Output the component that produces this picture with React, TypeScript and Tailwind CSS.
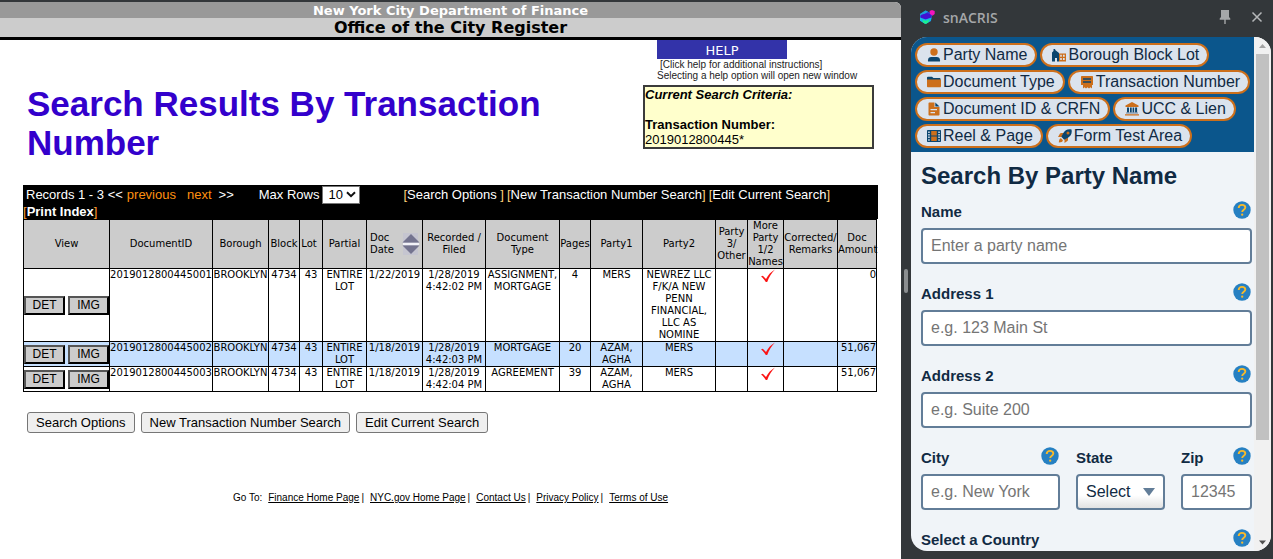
import type { ReactNode } from "react";

const NAVY = "#0b456e";
const ORANGE = "#cc6f1b";

function Person() {
  return (
    <svg width="14" height="14" viewBox="0 0 14 14" aria-hidden="true">
      <circle cx="7" cy="4" r="3.7" fill={ORANGE} />
      <path d="M1 13.6v-1.4c0-2 1.4-3.2 3.2-3.2h5.6c1.8 0 3.2 1.2 3.2 3.2v1.4z" fill={NAVY} />
    </svg>
  );
}

function Buildings() {
  return (
    <svg width="14" height="14" viewBox="0 0 14 14" aria-hidden="true">
      <path d="M0 13.500V4.500L1.500 3V1h1.700v1L7 5v8.500H5V10H3v3.500z" fill={NAVY} />
      <path fillRule="evenodd" d="M7 5.500h7v8H7zM8.200 6.800v2h1.600v-2zm2.800 0v2h1.700v-2zM8.200 10v2h1.600v-2zm2.800 0v2h1.700v-2z" fill={ORANGE} />
    </svg>
  );
}

function Folder() {
  return (
    <svg width="14" height="14" viewBox="0 0 14 14" aria-hidden="true">
      <path d="M0 5V2.500C0 2 .4 1.700 1 1.700h4L6.500 3h6c.6 0 1 .4 1 1v1z" fill={NAVY} />
      <path d="M0 4.500h14v6.700c0 .7-.5 1.100-1.100 1.100H1.100C.5 12.300 0 11.900 0 11.200z" fill={ORANGE} />
    </svg>
  );
}

function Receipt() {
  return (
    <svg width="14" height="14" viewBox="0 0 14 14" aria-hidden="true">
      <path d="M1 2c0-.6.4-1 1-1h10c.6 0 1 .4 1 1v8h-1v3.500l-1.500-1.200L9 13.500l-1.500-1.200L6 13.500l-1.500-1.200L3 13.500V10H1z" fill={ORANGE} />
      <path d="M3 3.300h8v1.500H3zM3 6.300h8v1.500H3z" fill={NAVY} />
    </svg>
  );
}

function Page() {
  return (
    <svg width="14" height="14" viewBox="0 0 14 14" aria-hidden="true">
      <path fillRule="evenodd" d="M1.500 1.500c0-.6.4-1 1-1H7.500V5H12.500v7.500c0 .6-.4 1-1 1h-9c-.6 0-1-.4-1-1zM3.500 7v1.300H10V7zm0 3v1.300H8V10z" fill={ORANGE} />
      <path d="M8.300.5L12.500 4.400H8.300z" fill={NAVY} />
    </svg>
  );
}

function Institution() {
  return (
    <svg width="14" height="14" viewBox="0 0 14 14" aria-hidden="true">
      <path d="M7 0l6.500 3.400V5H.5V3.400z" fill={ORANGE} />
      <path d="M2 5.500h2v5H2zM5 5.500h1.700v5H5zM7.600 5.500h1.600v5H7.600zM10.100 5.500h2v5h-2z" fill={NAVY} />
      <path d="M1 10.500h12v1.100H1z" fill="#6b86a0" />
      <path d="M0 12.300h14v1.200H0z" fill={ORANGE} />
    </svg>
  );
}

function Film() {
  return (
    <svg width="14" height="14" viewBox="0 0 14 14" aria-hidden="true">
      <path fillRule="evenodd" d="M1 1h12c.6 0 1 .4 1 1v10c0 .6-.4 1-1 1H1c-.6 0-1-.4-1-1V2c0-.6.4-1 1-1zM1.200 2.400v1.500h1.500V2.400zm0 2.600v1.500h1.500V5zm0 2.600v1.500h1.500V7.600zm0 2.600v1.500h1.500v-1.500zM11.300 2.400v1.500h1.500V2.400zm0 2.600v1.500h1.500V5zm0 2.600v1.500h1.500V7.600zm0 2.600v1.500h1.500v-1.500z" fill={NAVY} />
      <path d="M4.200 2h5.600v4.500H4.200zM4.200 7.500h5.600V12H4.200z" fill={ORANGE} />
    </svg>
  );
}

function Rocket() {
  return (
    <svg width="14" height="14" viewBox="0 0 14 14" aria-hidden="true">
      <path d="M6 4H3.200c-.5 0-.9.2-1.200.6L0 8h3.500zM10 8v2.800c0 .5-.2.9-.6 1.200L6.500 14v-3.500z" fill={ORANGE} />
      <path d="M13.500.4c-4-.8-6.500.9-8.200 3.600L3.300 7.800l2.900 2.900L10 8.700c2.700-1.700 4.400-4.200 3.500-8.300z" fill={NAVY} />
      <circle cx="10" cy="4.100" r="1.500" fill={ORANGE} />
      <path d="M3 9.300c-1.400.1-2 1.600-2.200 4.200 2.400-.2 4-.8 4.100-2.300z" fill={ORANGE} />
    </svg>
  );
}

function Logo() {
  return (
    <svg width="16" height="16" viewBox="0 0 16 16" aria-hidden="true">
      <path d="M1 5l5.500-3.500L12 4l1 2.500-1 5.500-5.500 3L1 11.500z" fill="#2b48d8" />
      <path d="M1 5l5.500-3.500L9 2.600 6 5 1 6.500z" fill="#1fa0d8" />
      <path d="M2 6l6-2 4 1.500V9L7 10.500 2 9z" fill="#4310d2" />
      <path d="M1 8.500l5.500 2 6-2-.7 3.500-5.300 3L1 11.700z" fill="#14b8e6" />
      <path d="M3.500 11l3.500.8 3.500-1.300L9 13.700 6.500 15 4 13.500z" fill="#1cf08f" />
      <path d="M10.500 2L13 1l2.700 1v3L13.500 6.800 11 5z" fill="#f414bd" />
    </svg>
  );
}

function Pin() {
  return (
    <svg width="12" height="14" viewBox="0 0 12 14" aria-hidden="true">
      <path d="M2 0h8v7l1.300 1.500v1.300H6.700V14H5.300V9.800H.7V8.500L2 7z" fill="#a5a7a9" />
    </svg>
  );
}

function CheckMark() {
  return (
    <svg className="ml-[13px] block" width="14" height="13" viewBox="0 0 14 13" role="img" aria-label="Yes">
      <path d="M0 7.500l1.800-.8L5 10C7 6 10 2.800 14 .5 10.500 4 8 8 6.200 13H4.800C3.500 10.700 2 9 0 7.500z" fill="#fb1414" />
    </svg>
  );
}

function SortArrows() {
  return (
    <svg width="18" height="22" viewBox="0 0 18 22" aria-hidden="true">
      <path d="M1 0h15v22H1z" fill="#c5c5d0" />
      <path d="M9 1l8.500 8.500H.5z" fill="#74748f" />
      <path d="M1 10h16v2H1z" fill="#f2f2f8" />
      <path d="M.5 12.500h17L9 21z" fill="#74748f" />
    </svg>
  );
}

const tabs: { label: string; icon: ReactNode }[] = [
  { label: "Party Name", icon: <Person /> },
  { label: "Borough Block Lot", icon: <Buildings /> },
  { label: "Document Type", icon: <Folder /> },
  { label: "Transaction Number", icon: <Receipt /> },
  { label: "Document ID & CRFN", icon: <Page /> },
  { label: "UCC & Lien", icon: <Institution /> },
  { label: "Reel & Page", icon: <Film /> },
  { label: "Form Test Area", icon: <Rocket /> },
];

function Lines({ text }: { text: string }) {
  return (
    <>
      {text.split("\n").map((line, i) => (
        <span key={i} className="block whitespace-nowrap">
          {line}
        </span>
      ))}
    </>
  );
}

const rows = [
  {
    id: "2019012800445001", date: "1/22/2019", filed: "1/28/2019\n4:42:02 PM", type: "ASSIGNMENT,\nMORTGAGE",
    pages: "4", party1: "MERS", party2: "NEWREZ LLC\nF/K/A NEW\nPENN\nFINANCIAL,\nLLC AS\nNOMINE", amount: "0", tinted: false,
  },
  {
    id: "2019012800445002", date: "1/18/2019", filed: "1/28/2019\n4:42:03 PM", type: "MORTGAGE",
    pages: "20", party1: "AZAM,\nAGHA", party2: "MERS", amount: "51,067", tinted: true,
  },
  {
    id: "2019012800445003", date: "1/18/2019", filed: "1/28/2019\n4:42:04 PM", type: "AGREEMENT",
    pages: "39", party1: "AZAM,\nAGHA", party2: "MERS", amount: "51,067", tinted: false,
  },
];

const smallButton =
  "h-[19px] flex-1 border-2 border-t-[#555] border-l-[#555] border-r-black border-b-black bg-[#ccc] text-center font-['Liberation_Sans',sans-serif] text-[12px] leading-[15px]";

function ResultsTable() {
  return (
    <table className="w-full table-fixed border-collapse text-center font-['DejaVu_Sans',sans-serif] text-[10px] leading-[12px] [&_td]:border [&_td]:border-black [&_td]:p-0 [&_td]:align-top [&_th]:border [&_th]:border-black [&_th]:p-0 [&_th]:font-normal">
      <colgroup>
        <col className="w-[86px]" />
        <col className="w-[103px]" />
        <col className="w-[56px]" />
        <col className="w-[31px]" />
        <col className="w-[23px]" />
        <col className="w-[44px]" />
        <col className="w-[56px]" />
        <col className="w-[63px]" />
        <col className="w-[74px]" />
        <col className="w-[31px]" />
        <col className="w-[52px]" />
        <col className="w-[73px]" />
        <col className="w-[32px]" />
        <col className="w-[36px]" />
        <col className="w-[54px]" />
        <col />
      </colgroup>
      <thead>
        <tr className="h-[49px] bg-[#ccc]">
          <th>View</th>
          <th>DocumentID</th>
          <th>Borough</th>
          <th>Block</th>
          <th><span className="block pr-1">Lot</span></th>
          <th>Partial</th>
          <th>
            <span className="flex items-center justify-between pr-[2px] pl-[3px]">
              <span className="text-left"><Lines text={"Doc\nDate"} /></span>
              <SortArrows />
            </span>
          </th>
          <th><Lines text={"Recorded /\nFiled"} /></th>
          <th><Lines text={"Document\nType"} /></th>
          <th>Pages</th>
          <th>Party1</th>
          <th>Party2</th>
          <th><Lines text={"Party\n3/\nOther"} /></th>
          <th><Lines text={"More\nParty\n1/2\nNames"} /></th>
          <th><Lines text={"Corrected/\nRemarks"} /></th>
          <th><Lines text={"Doc\nAmount"} /></th>
        </tr>
      </thead>
      <tbody>
        {rows.map((r) => (
          <tr key={r.id} className={r.tinted ? "bg-[#c6e0ff]" : "bg-white"}>
            <td className="align-middle!">
              <div className="flex gap-[3px]">
                <button type="button" className={smallButton}>DET</button>
                <button type="button" className={smallButton}>IMG</button>
              </div>
            </td>
            <td>{r.id}</td>
            <td>BROOKLYN</td>
            <td>4734</td>
            <td>43</td>
            <td><Lines text={"ENTIRE\nLOT"} /></td>
            <td>{r.date}</td>
            <td><Lines text={r.filed} /></td>
            <td><Lines text={r.type} /></td>
            <td>{r.pages}</td>
            <td><Lines text={r.party1} /></td>
            <td><Lines text={r.party2} /></td>
            <td></td>
            <td><CheckMark /></td>
            <td></td>
            <td className="text-right">{r.amount}</td>
          </tr>
        ))}
      </tbody>
    </table>
  );
}

const pageButton =
  "h-[21px] rounded-[3px] border border-[#767676] bg-[#efefef] px-2 text-[13px] leading-[19px]";

function BarLink({ children }: { children: string }) {
  return (
    <span className="whitespace-nowrap text-[#ffd27a]">
      [<a href="#" className="text-white">{children}</a>]
    </span>
  );
}

function RegisterPage() {
  return (
    <main className="min-w-0 flex-1 overflow-hidden rounded-tr-md bg-white font-['Liberation_Sans',Arial,sans-serif] text-[13px] text-black">
      <header className="border-b-[3px] border-black text-center font-['DejaVu_Sans',sans-serif] font-bold">
        <div className="h-4 bg-[#999] text-[13px] leading-[17px] text-white">New York City Department of Finance</div>
        <div className="h-[19px] bg-[#ccc] text-[16px] leading-[19px]">Office of the City Register</div>
      </header>

      <section className="flex h-[145px] justify-between pr-[27px] pl-[27px]">
        <h1 className="w-[600px] pt-11 text-[35px] leading-[39px] font-bold text-[#3300cc]">
          Search Results By Transaction Number
        </h1>
        <div className="w-[231px] shrink-0">
          <div className="pl-[14px] text-[10px] leading-[11px]">
            <button type="button" className="block h-[19px] w-[130px] bg-[#3333a9] font-['DejaVu_Sans',sans-serif] text-[13px] leading-[21px] text-white">
              HELP
            </button>
            <p className="pl-[3px] text-[#222]">[Click help for additional instructions]</p>
            <p className="pb-px whitespace-nowrap text-[#222]">Selecting a help option will open new window</p>
          </div>
          <div className="mt-[3px] h-16 border-2 border-[#3b3b3b] bg-[#ffffcc] leading-[15px]">
            <p className="font-bold italic">Current Search Criteria:</p>
            <p className="mt-[15px] font-bold">Transaction Number:</p>
            <p>2019012800445*</p>
          </div>
        </div>
      </section>

      <section className="px-[23px]">
        <div className="h-[34px] bg-black text-white">
          <div className="flex h-[19px] items-center pl-[3px] leading-[18px] whitespace-nowrap">
            <span>Records 1 - 3 &lt;&lt;</span>
            <a href="#" className="ml-1 text-[#ff9110]">previous</a>
            <a href="#" className="ml-[11px] text-[#ff9110]">next</a>
            <span className="ml-[7px]">&gt;&gt;</span>
            <label htmlFor="max-rows" className="ml-[25px]">Max Rows</label>
            <span className="ml-[3px] grid items-center">
              <select id="max-rows" className="col-start-1 row-start-1 h-[18px] w-[38px] appearance-none border border-[#767676] bg-white pl-[5px] text-[13px] leading-4 text-black">
                <option>10</option>
              </select>
              <svg className="pointer-events-none col-start-1 row-start-1 mr-1 justify-self-end" width="10" height="7" viewBox="0 0 10 7" aria-hidden="true">
                <path d="M1 1.200l4 4 4-4" fill="none" stroke="#111" strokeWidth="2" />
              </svg>
            </span>
            <span className="ml-[43px] flex gap-[3px]">
              <BarLink>Search Options </BarLink>
              <BarLink>New Transaction Number Search</BarLink>
              <BarLink>Edit Current Search</BarLink>
            </span>
          </div>
          <div className="h-[15px] leading-[15px] text-[#ff9f30]">
            [<a href="#" className="font-bold text-white">Print Index</a>]
          </div>
        </div>
        <div className="pr-px">
          <ResultsTable />
        </div>
        <div className="flex gap-[6px] pt-5 pl-1">
          <button type="button" className={pageButton}>Search Options</button>
          <button type="button" className={pageButton}>New Transaction Number Search</button>
          <button type="button" className={pageButton}>Edit Current Search</button>
        </div>
      </section>

      <footer className="mt-[59px] flex justify-center text-[10px] leading-[12px] whitespace-nowrap">
        <span className="pr-[6px]">Go To:</span>
        <a href="#" className="underline">Finance Home Page</a>
        <span className="pr-[6px] pl-[2px]">|</span>
        <a href="#" className="underline">NYC.gov Home Page</a>
        <span className="pr-[6px] pl-[2px]">|</span>
        <a href="#" className="underline">Contact Us</a>
        <span className="pr-[6px] pl-[2px]">|</span>
        <a href="#" className="underline">Privacy Policy</a>
        <span className="pr-[6px] pl-[2px]">|</span>
        <a href="#" className="underline">Terms of Use</a>
      </footer>
    </main>
  );
}

function HelpButton({ topic }: { topic: string }) {
  return (
    <button type="button" aria-label={"Help: " + topic} className="mr-px size-[18px] shrink-0">
      <svg className="block" width="18" height="18" viewBox="0 0 18 18" aria-hidden="true">
        <circle cx="9" cy="9" r="8.700" fill="#2680c2" />
        <path d="M5.700 7C5.700 4.800 7.200 3.900 9 3.900s3.300 1 3.300 2.700c0 2.200-3.100 2.200-3.100 4.500" fill="none" stroke="#f7b92b" strokeWidth="1.900" />
        <circle cx="9.200" cy="13.700" r="1.150" fill="#f7b92b" />
      </svg>
    </button>
  );
}

const control =
  "h-9 w-full rounded-[4px] border-2 border-[#627d98] bg-white px-2 text-[16px] leading-5 text-[#102a43] placeholder:text-[#757575]";

function Field({ id, label, help = true, className, children }: { id: string; label: string; help?: boolean; className?: string; children?: ReactNode }) {
  return (
    <div className={className}>
      <div className="flex h-[27px] items-start justify-between">
        <label htmlFor={id} className="pt-px text-[15px] leading-5 font-bold">{label}</label>
        {help && <HelpButton topic={label} />}
      </div>
      {children}
    </div>
  );
}

function SidePanel() {
  return (
    <aside className="flex w-[370px] shrink-0 flex-col pr-[2px] pb-2 font-['Liberation_Sans',Arial,sans-serif]">
      <div className="flex h-[35px] shrink-0 items-center pr-2 pb-[5px] pl-4 text-[#a5a7a9]">
        <Logo />
        <span className="ml-2 flex-1 pt-px font-['Open_Sans','Noto_Sans',sans-serif] text-[14px] font-semibold">snACRIS</span>
        <button type="button" aria-label="Pin"><Pin /></button>
        <button type="button" aria-label="Close" className="ml-5">
          <svg width="12" height="12" viewBox="0 0 12 12" aria-hidden="true">
            <path d="M1.500 1.500l9 9M10.500 1.500l-9 9" stroke="#b5b7b9" strokeWidth="1.500" />
          </svg>
        </button>
      </div>

      <div className="ml-2 flex min-h-0 flex-1 overflow-hidden rounded-2xl bg-[#f0f4f8] text-[#102a43]">
        <div className="min-w-0 flex-1 overflow-hidden">
          <nav className="flex flex-wrap gap-[3px] bg-[#0b568c] pt-[6px] pb-1 pl-1">
            {tabs.map((t) => (
              <button key={t.label} type="button" className="flex h-6 items-center gap-[2px] rounded-full border-2 border-[#cc6f1b] bg-[#dbe3ed] pr-2 pl-[10px] text-[16px] leading-5 whitespace-nowrap">
                {t.icon}
                {t.label}
              </button>
            ))}
          </nav>
          <form className="pr-[2px] pl-[10px]">
            <h2 className="pt-[10px] text-[24px] leading-7 font-bold">Search By Party Name</h2>
            <div className="flex flex-col gap-[19px] pt-[11px]">
              <Field id="name" label="Name">
                <input id="name" type="text" placeholder="Enter a party name" className={control} />
              </Field>
              <Field id="address1" label="Address 1">
                <input id="address1" type="text" placeholder="e.g. 123 Main St" className={control} />
              </Field>
              <Field id="address2" label="Address 2">
                <input id="address2" type="text" placeholder="e.g. Suite 200" className={control} />
              </Field>
              <div className="flex gap-4">
                <Field id="city" label="City" className="min-w-0 flex-1">
                  <input id="city" type="text" placeholder="e.g. New York" className={control} />
                </Field>
                <Field id="state" label="State" help={false} className="w-[89px]">
                  <div className="grid items-center">
                    <select id="state" className={control + " col-start-1 row-start-1 appearance-none bg-linear-to-b from-white from-60% to-[#e2e2e2]"}>
                      <option>Select</option>
                    </select>
                    <svg className="pointer-events-none col-start-1 row-start-1 mr-[10px] justify-self-end" width="12" height="8" viewBox="0 0 12 8" aria-hidden="true">
                      <path d="M0 0h12L6 8z" fill="#627d98" />
                    </svg>
                  </div>
                </Field>
                <Field id="zip" label="Zip" className="w-[71px]">
                  <input id="zip" type="text" placeholder="12345" className={control} />
                </Field>
              </div>
              <Field id="country" label="Select a Country">
                <select id="country" className={control} />
              </Field>
            </div>
          </form>
        </div>

        <div className="flex w-[17px] shrink-0 flex-col items-center bg-[#f1f1f1]" aria-hidden="true">
          <svg width="17" height="17" viewBox="0 0 17 17">
            <path d="M8.500 7l3.500 4H5z" fill="#a3a3a3" />
          </svg>
          <div className="w-[13px] grow-[386] bg-[#c1c1c1]" />
          <div className="grow-[94]" />
          <svg width="17" height="17" viewBox="0 0 17 17">
            <path d="M8.500 10.500L12 6.500H5z" fill="#505050" />
          </svg>
        </div>
      </div>
    </aside>
  );
}

export default function App() {
  return (
    <div className="flex h-screen overflow-hidden bg-[#33373a] pt-[2px]">
      <RegisterPage />
      <div className="flex w-[2px] shrink-0 items-center" aria-hidden="true">
        <div className="ml-[3px] h-6 w-1 shrink-0 rounded-full bg-[#8b8e90]" />
      </div>
      <SidePanel />
    </div>
  );
}
